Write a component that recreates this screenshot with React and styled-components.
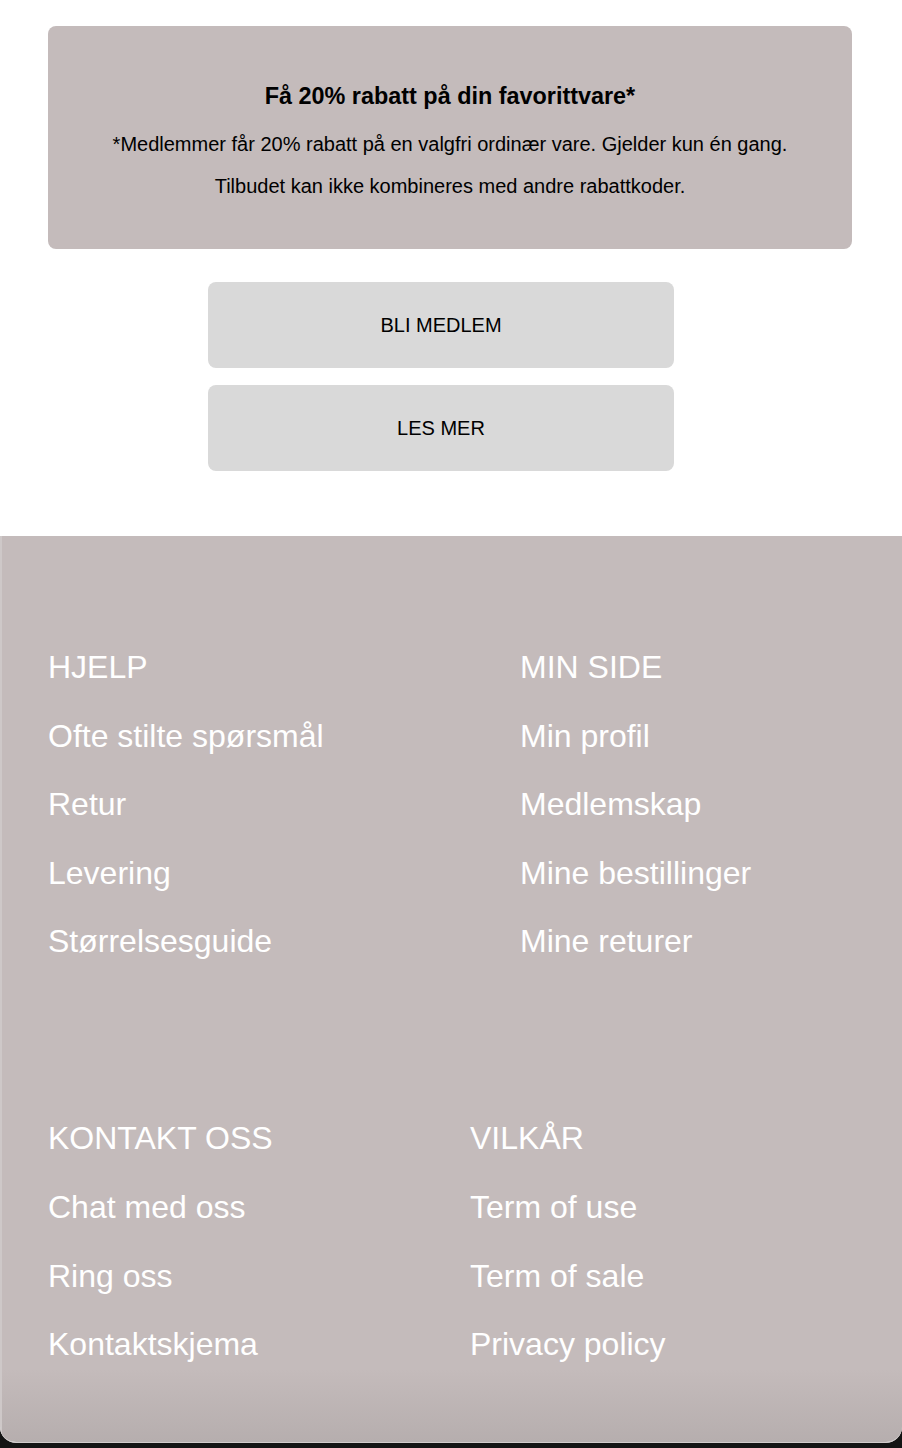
import React from "react"
import styled, { createGlobalStyle } from "styled-components"

const GlobalStyle = createGlobalStyle`
  html, body {
    margin: 0;
    padding: 0;
    background: #141414;
  }
  body {
    font-family: "Liberation Sans", Arial, Helvetica, sans-serif;
  }
`

const Window = styled.div`
  width: 902px;
  min-height: 1443px;
  background: #ffffff;
  border-bottom-left-radius: 16px;
  border-bottom-right-radius: 16px;
  overflow: hidden;
  display: flex;
  flex-direction: column;
  border-bottom: 1px solid #d2cccc;
  box-sizing: border-box;
`

const Top = styled.section`
  padding: 26px 50px 65px 48px;
  display: flex;
  flex-direction: column;
`

const OfferCard = styled.div`
  background: #c4bbbb;
  border-radius: 8px;
  padding: 56px 20px 51px;
  text-align: center;
  color: #000;
  h3 {
    margin: 0 0 22px;
    font-size: 23.4px;
    line-height: 28px;
    font-weight: 700;
  }
  p {
    margin: 0;
    font-size: 20px;
    line-height: 24px;
  }
  p + p {
    margin-top: 18px;
  }
`

const Buttons = styled.div`
  margin: 33px 0 0 160px;
  width: 466px;
  display: flex;
  flex-direction: column;
  gap: 17px;
`

const Button = styled.button`
  height: 86px;
  border: none;
  border-radius: 8px;
  background: #d9d9d9;
  color: #000;
  font-family: "Liberation Sans", Arial, sans-serif;
  font-size: 20px;
  cursor: pointer;
`

const Footer = styled.footer`
  flex: 1;
  border-left: 2px solid #cec8c8;
  background: linear-gradient(
    to bottom,
    #c4bbbb 0%,
    #c4bbbb 92%,
    #b6aeae 100%
  );
  padding: 113px 20px 79px 46px;
  display: flex;
  flex-direction: column;
  gap: 160px;
`

const Group = styled.div`
  display: grid;
  grid-template-columns: ${p => p.$first}px 1fr;
`

const Column = styled.ul`
  list-style: none;
  margin: 0;
  padding: 0;
  display: flex;
  flex-direction: column;
  gap: 31.6px;
`

const Item = styled.li`
  color: #ffffff;
  font-size: 32px;
  line-height: 37px;
  white-space: nowrap;
`

const groups = [
  {
    first: 472,
    columns: [
      ["HJELP", "Ofte stilte spørsmål", "Retur", "Levering", "Størrelsesguide"],
      ["MIN SIDE", "Min profil", "Medlemskap", "Mine bestillinger", "Mine returer"],
    ],
  },
  {
    first: 422,
    columns: [
      ["KONTAKT OSS", "Chat med oss", "Ring oss", "Kontaktskjema"],
      ["VILKÅR", "Term of use", "Term of sale", "Privacy policy"],
    ],
  },
]

const App = () => {
  return (
    <>
      <GlobalStyle />
      <Window>
        <Top>
          <OfferCard>
            <h3>Få 20% rabatt på din favorittvare*</h3>
            <p>
              *Medlemmer får 20% rabatt på en valgfri ordinær vare. Gjelder kun
              én gang.
            </p>
            <p>Tilbudet kan ikke kombineres med andre rabattkoder.</p>
          </OfferCard>
          <Buttons>
            <Button>BLI MEDLEM</Button>
            <Button>LES MER</Button>
          </Buttons>
        </Top>
        <Footer>
          {groups.map((group, gi) => (
            <Group key={gi} $first={group.first}>
              {group.columns.map((col, ci) => (
                <Column key={ci}>
                  {col.map(text => (
                    <Item key={text}>{text}</Item>
                  ))}
                </Column>
              ))}
            </Group>
          ))}
        </Footer>
      </Window>
    </>
  )
}

export default App
